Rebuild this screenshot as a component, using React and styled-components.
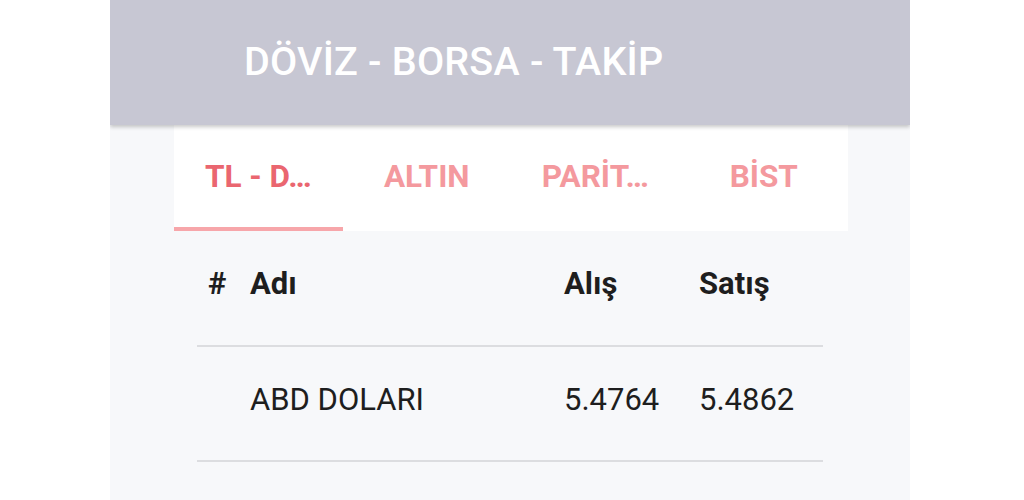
import React from "react";
import styled, { createGlobalStyle } from "styled-components";

const Global = createGlobalStyle`
  html, body { margin: 0; padding: 0; background: #ffffff; }
  body { font-family: Roboto, "Noto Sans", sans-serif; }
  * { box-sizing: border-box; }
`;

const Screen = styled.div`
  width: 800px;
  height: 500px;
  margin: 0 auto 0 110px;
  background: #f7f8fa;
  display: flex;
  flex-direction: column;
  overflow: hidden;
`;

const AppBar = styled.header`
  height: 125px;
  flex: none;
  background: #c7c7d3;
  display: flex;
  align-items: center;
  padding-left: 134px;
  box-shadow: 0 2px 4px rgba(0, 0, 0, 0.22);
  position: relative;
  z-index: 1;
`;

const Title = styled.h1`
  margin: 0;
  font-size: 39.5px;
  font-weight: 500;
  color: #ffffff;
  letter-spacing: 0.2px;
  padding-bottom: 2px;
`;

const TabBar = styled.nav`
  width: 674px;
  margin-left: 64px;
  height: 106px;
  flex: none;
  background: #ffffff;
  display: grid;
  grid-template-columns: repeat(4, 1fr);
`;

const Tab = styled.div`
  display: flex;
  align-items: center;
  justify-content: center;
  font-size: 31.5px;
  font-weight: 700;
  color: ${(p) => (p.$active ? "#ea6670" : "#f4999e")};
  border-bottom: 4px solid ${(p) => (p.$active ? "#f7a6aa" : "transparent")};
  padding-bottom: 0;
  white-space: nowrap;
`;

const Table = styled.div`
  width: 626px;
  margin-left: 87px;
  display: flex;
  flex-direction: column;
`;

const Row = styled.div`
  display: grid;
  grid-template-columns: 42px 314px 135px 1fr;
  align-items: center;
  padding-left: 11px;
  padding-bottom: ${(p) => p.$pb}px;
  height: ${(p) => p.$h}px;
  border-bottom: 2px solid #dcdde0;
  color: #1e1e1e;
  font-size: 31px;
  font-weight: ${(p) => (p.$head ? 700 : 400)};
`;

const Cell = styled.div`
  white-space: nowrap;
`;

const tabs = ["TL - D…", "ALTIN", "PARİT…", "BİST"];

export default function App() {
  return (
    <>
      <Global />
      <Screen>
        <AppBar>
          <Title>DÖVİZ - BORSA - TAKİP</Title>
        </AppBar>
        <TabBar>
          {tabs.map((t, i) => (
            <Tab key={t} $active={i === 0}>
              {t}
            </Tab>
          ))}
        </TabBar>
        <Table>
          <Row $head $h={116} $pb={10}>
            <Cell>#</Cell>
            <Cell>Adı</Cell>
            <Cell>Alış</Cell>
            <Cell>Satış</Cell>
          </Row>
          <Row $h={115} $pb={8}>
            <Cell></Cell>
            <Cell>ABD DOLARI</Cell>
            <Cell>5.4764</Cell>
            <Cell>5.4862</Cell>
          </Row>
        </Table>
      </Screen>
    </>
  );
}
